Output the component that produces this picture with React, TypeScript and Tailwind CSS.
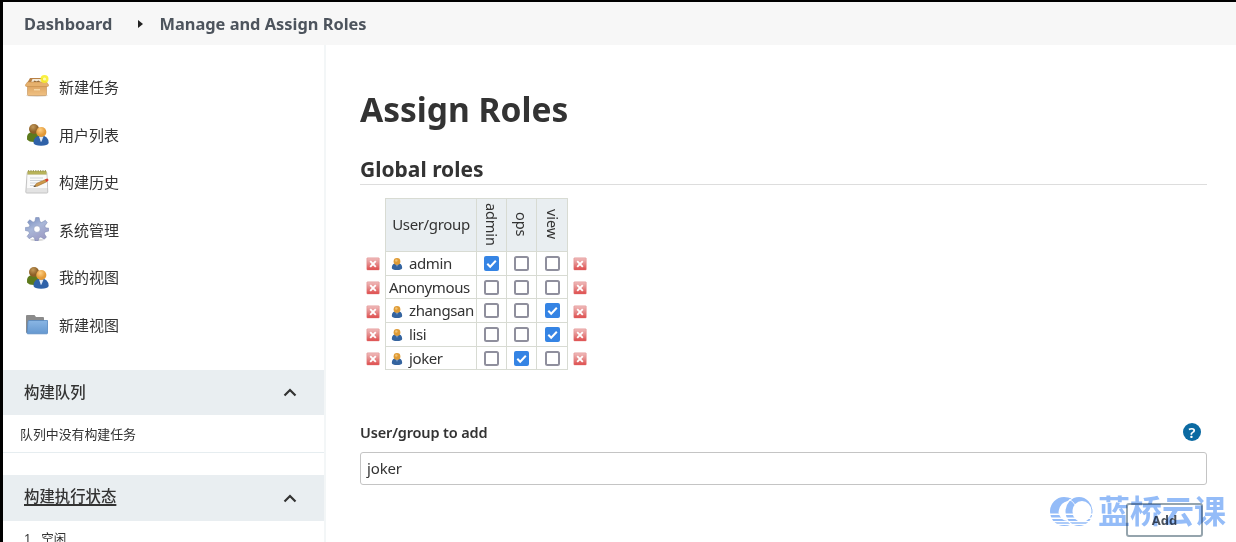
import React from "react";

const FONT = "font-['Noto_Sans','Noto_Sans_CJK_SC',sans-serif]";

function BoxIcon() {
  return (
    <svg viewBox="0 0 24 24" className="size-6">
      <defs>
        <linearGradient id="box" x1="0" y1="0" x2="0" y2="1"><stop offset="0" stopColor="#d99f5b" /><stop offset="1" stopColor="#f0c183" /></linearGradient>
      </defs>
      <ellipse cx="12" cy="20.500" rx="11" ry="1.500" fill="#e4e0da" />
      <path d="M2.500 9h19v10.500q0 1-1 1h-17q-1 0-1-1z" fill="url(#box)" stroke="#b98345" strokeWidth="0.500" />
      <path d="M5 3h14l2.500 4.500h-19z" fill="#b98145" />
      <path d="M7.500 4h9l1.500 3.500H6z" fill="#f4ead8" />
      <path d="M8 7.500l1.500-2 2 1 2-1 2.500 2z" fill="#8a6437" />
      <path d="M2.500 7h19l2.500 3.500q-.5 1-2 1H2q-1.500 0-2-1z" fill="#e6b16d" stroke="#bf8747" strokeWidth="0.500" />
      <path d="M9 14h6v1.500H9z" fill="#f5d5a3" />
      <circle cx="19.500" cy="4" r="4" fill="#f8ee2b" opacity="0.900" />
      <circle cx="19.500" cy="4" r="1.600" fill="#fffcb0" />
    </svg>
  );
}

function UsersIcon() {
  return (
    <svg viewBox="0 0 24 24" className="size-6">
      <defs>
        <radialGradient id="head1" cx="0.400" cy="0.300"><stop offset="0" stopColor="#c49a5a" /><stop offset="1" stopColor="#8c5f26" /></radialGradient>
        <radialGradient id="head2" cx="0.400" cy="0.300"><stop offset="0" stopColor="#ffd083" /><stop offset="1" stopColor="#e39a38" /></radialGradient>
      </defs>
      <path d="M2 16.500q-1-7.500 6-7.500t8 7q-2 3-7 3t-7-2.500z" fill="#5d7a1c" />
      <circle cx="9" cy="6" r="5" fill="url(#head1)" />
      <path d="M8.500 20q0-7.500 7.500-7.500t7.700 7.500q-1 2.800-7.600 2.800T8.500 20z" fill="#2f62a8" />
      <path d="M14 13.500h4.500l-2 5-.6.500z" fill="#dfe9f6" />
      <circle cx="16.300" cy="9" r="5.100" fill="url(#head2)" />
    </svg>
  );
}

function NotepadIcon() {
  return (
    <svg viewBox="0 0 24 24" className="size-6">
      <path d="M2.200 2.500h19.600l1 19.500q0 1-1 1H1.800q-1 0-1-1z" fill="#e3e3e3" stroke="#c4c4c4" />
      <path d="M2.500 5h19l.7 13H2z" fill="#fafafa" />
      <path d="M2.500 1h19v3.500h-19z" fill="#b8b35a" />
      <path d="M3 .8h18" stroke="#8d8a48" strokeWidth="1.200" strokeDasharray="1.200 1.200" />
      <path d="M5 8h13M5 10.500h12M5 13h8M5 15.500h4" stroke="#cfd4d9" />
      <path d="M9 16.500l2.500-3 9-4 1.300 2.200-9.500 4.500z" fill="#cf9a4b" stroke="#9b6a2c" strokeWidth="0.600" />
      <path d="M20 9.400l2-1q1.500.2 1.500 2l-2 1.500z" fill="#dd4030" />
      <path d="M8.300 17l1.800-1.700.8 1.200z" fill="#444" />
    </svg>
  );
}

function GearIcon() {
  return (
    <svg viewBox="0 0 24 24" className="size-6 -translate-y-px">
      <defs>
        <linearGradient id="gear" x1="0" y1="0" x2="0.600" y2="1"><stop offset="0" stopColor="#6f87bb" /><stop offset="0.500" stopColor="#a9b7d8" /><stop offset="1" stopColor="#9d9bc4" /></linearGradient>
      </defs>
      <ellipse cx="12" cy="22.800" rx="7" ry="1.200" fill="#d9d9d9" />
      <g transform="rotate(2 12 12)">
        <path fill="url(#gear)" stroke="#7584b0" strokeWidth="0.500" strokeLinejoin="round" fillRule="evenodd" d="M10.300.5h3.400l.9 4 1.800.8 3.600-2.300 2 2.200-2.300 3.500.8 1.800 3.300.3v2.900l-3.600.9-.7 2 2.200 3.200-2.200 2.100-3.300-2-2 .9-.7 3.200h-3l-.7-3.200-2-.9-3.300 2-2.100-2.200 2.200-3.200-.9-1.900-3.300-.7v-3l3.400-.4.900-2L2.300 5.400l2.200-2.300 3.300 2.200 1.800-.8zM12 8.800a3.300 3.300 0 1 0 0 6.600 3.300 3.300 0 0 0 0-6.600z" />
      </g>
    </svg>
  );
}

function FolderIcon() {
  return (
    <svg viewBox="0 0 24 24" className="size-6">
      <defs>
        <linearGradient id="folder" x1="0" y1="0" x2="0" y2="1"><stop offset="0" stopColor="#8ab6e4" /><stop offset="1" stopColor="#6598d0" /></linearGradient>
      </defs>
      <path d="M1 20V3q0-1 1-1h7.500l1.500 2H18q1 0 1 1v5z" fill="#8b8b8b" />
      <path d="M4 7.500h18.500v12.500q0 .8-.8.800H2.800q-.8 0-.8-.8L3 8.500q0-1 1-1z" fill="url(#folder)" stroke="#5588c0" strokeWidth="0.800" />
    </svg>
  );
}

function PersonIcon() {
  return (
    <svg viewBox="0 0 12 14" className="h-3.5 w-3">
      <path d="M.8 11q0-5 5.200-5t5.200 5q-.5 2-5.200 2t-5.200-2z" fill="#35649f" />
      <path d="M5.200 7h1.600L6 10z" fill="#b9cfe8" />
      <circle cx="6" cy="4.400" r="3.400" fill="#df9b35" />
      <circle cx="5.300" cy="3.500" r="1.300" fill="#f2c272" />
    </svg>
  );
}

function DeleteIcon() {
  return (
    <svg viewBox="0 0 14 14" className="h-3.5 w-3.5">
      <defs>
        <linearGradient id="del" x1="0" y1="0" x2="0" y2="1"><stop offset="0" stopColor="#f0bcbc" /><stop offset="0.500" stopColor="#e58a8a" /><stop offset="1" stopColor="#df4a4a" /></linearGradient>
      </defs>
      <rect x="0.800" y="0.800" width="12.500" height="12.200" rx="0.800" fill="url(#del)" stroke="#e08080" strokeWidth="0.400" />
      <path d="M4.200 4.200l5.600 5.600M9.800 4.200L4.200 9.800" stroke="#fff" strokeWidth="1.900" />
    </svg>
  );
}

function Check({ on }: { on: boolean }) {
  return on ? (
    <svg viewBox="0 0 15 15" className="size-[15px]">
      <rect width="15" height="15" rx="2" fill="#3584e4" />
      <path d="M3.300 7.700l2.900 3 5.600-5.900" fill="none" stroke="#fff" strokeWidth="2" />
    </svg>
  ) : (
    <span className="block size-[15px] rounded-[2.5px] border-2 border-[#8f8f9d] bg-white" />
  );
}

function Chevron() {
  return (
    <svg viewBox="0 0 14 10" className="h-2.5 w-3.5">
      <path d="M1.500 8.500L7 3 12.500 8.500" fill="none" stroke="#333" strokeWidth="2.200" />
    </svg>
  );
}

const tasks = [
  { label: "新建任务", icon: BoxIcon },
  { label: "用户列表", icon: UsersIcon },
  { label: "构建历史", icon: NotepadIcon },
  { label: "系统管理", icon: GearIcon },
  { label: "我的视图", icon: UsersIcon },
  { label: "新建视图", icon: FolderIcon },
];

const roles = ["admin", "ops", "view"];

const users = [
  { name: "admin", person: true, checked: 0 },
  { name: "Anonymous", person: false, checked: -1 },
  { name: "zhangsan", person: true, checked: 2 },
  { name: "lisi", person: true, checked: 2 },
  { name: "joker", person: true, checked: 1 },
];

function Sidebar() {
  return (
    <aside className="flex w-[323px] shrink-0 flex-col border-r-2 border-[#f3f6f7]">
      <nav className="flex flex-col pt-[18.400px]">
        {tasks.map(({ label, icon: Icon }) => (
          <a key={label} className="flex h-[47.6px] items-center gap-[10px] pl-[22px] text-[15px] text-[#333]">
            <Icon />
            <span>{label}</span>
          </a>
        ))}
      </nav>
      <div className="mt-[21px] flex h-[45px] shrink-0 items-center justify-between bg-[#e9eef1] pr-[27px] pl-[21px] text-[15.4px] font-medium text-[#333]">
        <span>构建队列</span>
        <Chevron />
      </div>
      <div className="flex h-[38px] shrink-0 items-center border-b border-[#e6edf0] pt-0.5 pl-[17px] text-[12.900px] text-[#333]">队列中没有构建任务</div>
      <div className="mt-[22px] flex h-[46px] shrink-0 items-center justify-between bg-[#e9eef1] pr-[27px] pl-[21px] text-[15.4px] font-medium text-[#333]">
        <span className="-mt-0.5 underline decoration-2 underline-offset-2">构建执行状态</span>
        <Chevron />
      </div>
      <div className="flex gap-2.5 pt-[9px] pl-[21px] text-[12.500px] text-[#333]">
        <span>1</span>
        <span>空闲</span>
      </div>
    </aside>
  );
}

function RoleTable() {
  return (
    <div className="mt-[13px] flex flex-col text-[15px] text-[#333]">
      <div className="ml-[25px] grid h-[54px] w-[183px] grid-cols-[91px_30px_30px_30px] border border-[#d8dbd3] bg-[#e9eef1]">
        <div className="flex items-center justify-center border-r border-[#d8dbd3] pb-0.5 tracking-[-0.35px]">User/group</div>
        {roles.map((r) => (
          <div key={r} className="flex items-center justify-center border-r border-[#d8dbd3] pb-0.5 pl-px last:border-r-0">
            <span className="text-[14.500px] leading-none tracking-[-0.1px] [writing-mode:vertical-rl]">{r}</span>
          </div>
        ))}
      </div>
      {users.map((u) => (
        <div key={u.name} className="flex h-[23.700px] items-center pl-[6px]">
          <span className="mt-px"><DeleteIcon /></span>
          <div className="ml-[5px] grid h-full w-[183px] grid-cols-[91px_30px_30px_30px] border-x border-b border-[#d8dbd3]">
            <div className="flex items-center gap-[5px] border-r border-[#d8dbd3] pl-[3px] leading-none tracking-[-0.4px]">
              {u.person && <span className="mt-0.5 mr-px ml-0.5"><PersonIcon /></span>}
              <span>{u.name}</span>
            </div>
            {roles.map((r, i) => (
              <div key={r} className="flex items-center justify-center border-r border-[#d8dbd3] pr-px pl-px last:border-r-0 last:px-0">
                <Check on={u.checked === i} />
              </div>
            ))}
          </div>
          <span className="mt-px ml-[5px]"><DeleteIcon /></span>
        </div>
      ))}
    </div>
  );
}

function Watermark() {
  return (
    <div className="pointer-events-none absolute top-[491px] left-[1047px] flex items-center gap-[5px] text-[#94bcf8] mix-blend-multiply">
      <svg viewBox="0 0 43 32" className="h-8 w-[43px]">
        <defs>
          <clipPath id="bands">
            <path d="M0 0h43v18.500H0zM0 20h43v2.500H0zM0 24h43v2H0zM0 27.300h43v1.500H0zM0 30h43v1H0z" />
          </clipPath>
        </defs>
        <g clipPath="url(#bands)" fill="currentColor" fillRule="evenodd">
          <path d="M14 2a14 14.500 0 1 0 0 29q4 0 7-1.500-2-1.500-3.500-3.500-7-.5-9-8.500 1-9.500 9-11.500 1.500-1.500 4-2.500-3-1.500-7.500-1.500z" />
          <path d="M29 2a13.500 14.500 0 1 0 0 29 13.500 14.500 0 1 0 0-29zM32 6a9.500 10.500 0 1 1 0 21 9.500 10.500 0 1 1 0-21z" />
        </g>
        <path d="M19 4.500q6 2.500 8 10" fill="none" stroke="#fff" strokeWidth="0.900" />
      </svg>
      <span className="text-[32px] leading-9 font-bold whitespace-nowrap">蓝桥云课</span>
    </div>
  );
}

export default function App() {
  return (
    <div className={"relative flex h-[542px] w-[1236px] flex-col overflow-hidden border-t-2 border-l-[3px] border-black bg-white " + FONT}>
      <header className="flex h-[43px] shrink-0 items-center bg-[#f7f7f7] pt-px pl-[21px] text-[16.400px] font-bold text-[#4d545d]">
        <span>Dashboard</span>
        <span className="mr-4 ml-[26px] border-y-4 border-l-[5px] border-y-transparent border-l-[#222]" />
        <span>Manage and Assign Roles</span>
      </header>
      <div className="flex min-h-0 flex-1">
        <Sidebar />
        <main className="flex flex-1 flex-col pt-[40px] pr-[29px] pl-[34px] text-[#333]">
          <h1 className="text-[33.500px] leading-[48px] font-bold">Assign Roles</h1>
          <h2 className="mt-5 h-[32px] border-b border-[#ddd] text-[21px] leading-8 font-bold">Global roles</h2>
          <RoleTable />
          <div className="mt-[50px] flex h-6 items-center justify-between pr-1.5">
            <label className="text-[14.500px] font-semibold tracking-[-0.15px]">User/group to add</label>
            <span className="flex size-[18px] items-center justify-center rounded-full bg-[#0b6aa2] text-[15px] leading-none font-semibold text-white">?</span>
          </div>
          <div className="mt-2 flex h-[33px] shrink-0 items-center rounded-[3px] border border-[#c4c4c4] pb-px pl-1.5 text-[15px] tracking-[-0.15px]">joker</div>
          <button className="mt-[18px] mr-1 flex h-[34px] w-[77px] shrink-0 items-center justify-center self-end rounded-[3px] border-2 border-[#95a4ad] bg-white text-[13px] font-bold text-[#4d545d]">Add</button>
        </main>
      </div>
      <Watermark />
    </div>
  );
}
